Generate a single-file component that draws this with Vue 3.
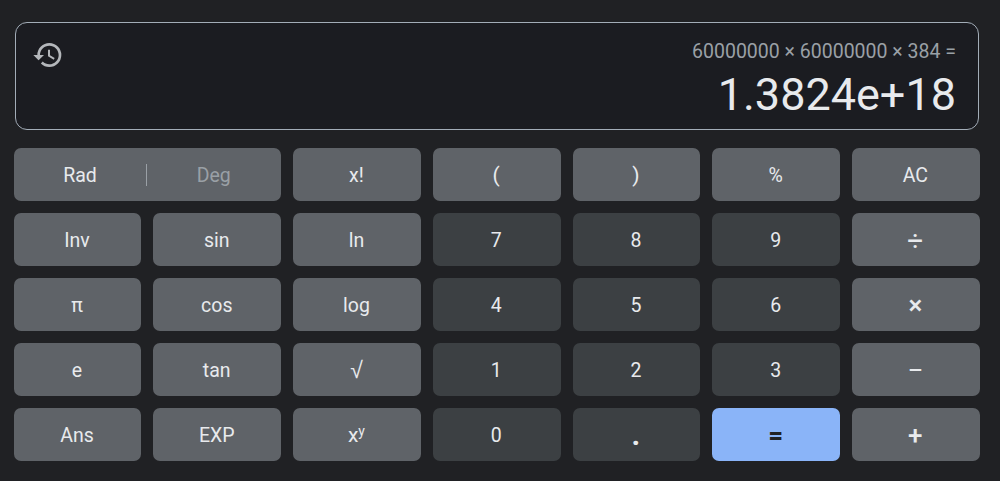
<script setup>
const keys = [
  { label: 'x!' }, { label: '(', cls: 'paren' }, { label: ')', cls: 'paren' }, { label: '%' }, { label: 'AC' },
  { label: 'Inv' }, { label: 'sin' }, { label: 'ln' }, { label: '7', kind: 'num' }, { label: '8', kind: 'num' }, { label: '9', kind: 'num' }, { label: '÷', kind: 'op thin' },
  { label: 'π' }, { label: 'cos' }, { label: 'log' }, { label: '4', kind: 'num' }, { label: '5', kind: 'num' }, { label: '6', kind: 'num' }, { label: '×', kind: 'op' },
  { label: 'e' }, { label: 'tan' }, { label: '√', kind: 'root' }, { label: '1', kind: 'num' }, { label: '2', kind: 'num' }, { label: '3', kind: 'num' }, { label: '−', kind: 'op thin' },
  { label: 'Ans' }, { label: 'EXP' }, { label: 'x', sup: 'y', cls: 'pow' }, { label: '0', kind: 'num' }, { label: '.', kind: 'num dot' }, { label: '=', kind: 'eq' }, { label: '+', kind: 'op' },
]
</script>

<template>
  <div class="calc">
    <div class="display">
      <svg class="history" viewBox="0 0 24 24" width="32" height="32">
        <path fill="currentColor" d="M13 3a9 9 0 0 0-9 9H1l3.89 3.89.07.14L9 12H6c0-3.87 3.13-7 7-7s7 3.13 7 7-3.13 7-7 7c-1.93 0-3.68-.79-4.94-2.06l-1.42 1.42A8.954 8.954 0 0 0 13 21a9 9 0 0 0 0-18zm-1 5v5l4.28 2.54.72-1.21-3.5-2.08V8H12z"/>
      </svg>
      <div class="readout">
        <div class="expr">60000000 × 60000000 × 384 =</div>
        <div class="result">1.3824e+18</div>
      </div>
    </div>
    <div class="pad">
      <div class="key mode">
        <span class="mode-on">Rad</span>
        <span class="mode-sep"></span>
        <span class="mode-off">Deg</span>
      </div>
      <div
        v-for="k in keys"
        :key="k.label"
        class="key"
        :class="[k.kind, k.cls]"
      >
        <span>{{ k.label }}<sup v-if="k.sup">{{ k.sup }}</sup></span>
      </div>
    </div>
  </div>
</template>

<style>
html, body {
  background: #202124;
}
</style>

<style scoped>
.calc {
  width: 1000px;
  height: 481px;
  box-sizing: border-box;
  padding: 22px 20px 0 13.7px;
  background: #202124;
  font-family: Roboto, "Liberation Sans", sans-serif;
  overflow: hidden;
}

.display {
  display: flex;
  justify-content: space-between;
  box-sizing: border-box;
  width: 964px;
  height: 108px;
  margin-left: 1.3px;
  padding: 17px 22px 0 16px;
  border: 1px solid #a3adb8;
  border-radius: 12px;
  background: #1b1c21;
}

.history {
  margin-top: -1px;
  color: #b4b7bb;
}

.readout {
  text-align: right;
}

.expr {
  font-size: 19.5px;
  line-height: 24px;
  color: #9aa0a6;
}

.result {
  margin-top: 7px;
  font-size: 45px;
  line-height: 48px;
  color: #e8eaed;
}

.pad {
  display: grid;
  grid-template-columns: repeat(7, 1fr);
  grid-auto-rows: 53px;
  gap: 12px;
  width: 966px;
  margin-top: 18px;
}

.key {
  display: flex;
  align-items: center;
  justify-content: center;
  box-sizing: border-box;
  padding: 1px 1px 0 0;
  border-radius: 7px;
  background: #5f6368;
  color: #e8eaed;
  font-size: 19.5px;
}

.key sup {
  font-size: 14px;
  line-height: 1;
  vertical-align: 6px;
}

.paren {
  font-size: 21px;
}

.pow {
  font-size: 21px;
}

.num {
  background: #3c4043;
}

.op {
  font-size: 26px;
  font-weight: 500;
}

.thin {
  font-size: 28px;
  font-weight: 400;
}

.root {
  font-family: "Liberation Sans", sans-serif;
  font-size: 23px;
}

.dot {
  font-size: 30px;
  font-weight: 700;
}

.dot span {
  transform: translateY(-1px);
}

.eq {
  background: #8ab4f8;
  color: #202124;
  font-size: 26px;
  font-weight: 700;
}

.mode {
  grid-column: span 2;
  display: grid;
  grid-template-columns: 1fr 1px 1fr;
  align-items: center;
  justify-items: center;
}

.mode-on {
  color: #e8eaed;
}

.mode-sep {
  width: 1px;
  height: 22px;
  background: #9aa0a6;
}

.mode-off {
  color: #9aa0a6;
}
</style>
